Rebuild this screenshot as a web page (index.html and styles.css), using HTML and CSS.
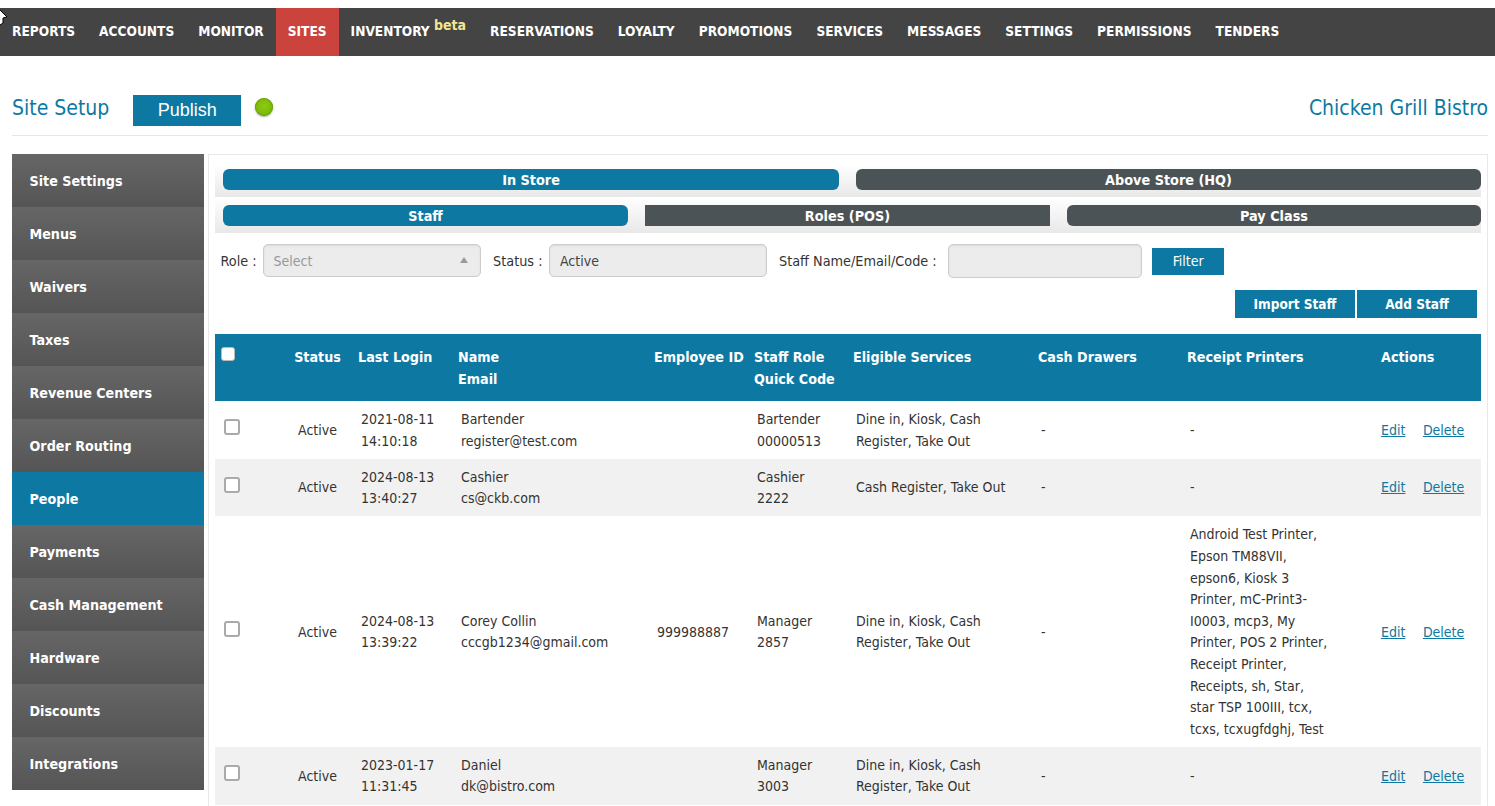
FILE: index.html

```html
<!DOCTYPE html>
<html lang="en">
<head>
    <meta charset="UTF-8">
    <title>Site Setup</title>
    <link rel="stylesheet" href="styles.css">
</head>
<body>
    <svg class="cursor" width="8" height="26" viewBox="0 0 8 26"><path d="M0 10 L7 17 L3 18 L3 23 L0 25" fill="#fff" stroke="#000" stroke-width="1"/></svg>

    <nav class="topnav">
        <a href="#">REPORTS</a>
        <a href="#">ACCOUNTS</a>
        <a href="#">MONITOR</a>
        <a href="#" class="active">SITES</a>
        <a href="#">INVENTORY <sup class="beta">beta</sup></a>
        <a href="#">RESERVATIONS</a>
        <a href="#">LOYALTY</a>
        <a href="#">PROMOTIONS</a>
        <a href="#">SERVICES</a>
        <a href="#">MESSAGES</a>
        <a href="#">SETTINGS</a>
        <a href="#">PERMISSIONS</a>
        <a href="#">TENDERS</a>
    </nav>

    <header class="page-head">
        <h1>Site Setup</h1>
        <button class="publish">Publish</button>
        <span class="status-dot"></span>
        <div class="site-name">Chicken Grill Bistro</div>
    </header>

    <div class="layout">
        <aside class="sidebar">
            <a href="#">Site Settings</a>
            <a href="#">Menus</a>
            <a href="#">Waivers</a>
            <a href="#">Taxes</a>
            <a href="#">Revenue Centers</a>
            <a href="#">Order Routing</a>
            <a href="#" class="active">People</a>
            <a href="#">Payments</a>
            <a href="#">Cash Management</a>
            <a href="#">Hardware</a>
            <a href="#">Discounts</a>
            <a href="#">Integrations</a>
        </aside>

        <main class="panel">
            <div class="tabs tabs-top">
                <a href="#" class="tab on">In Store</a>
                <a href="#" class="tab">Above Store (HQ)</a>
            </div>
            <div class="tabs tabs-sub">
                <a href="#" class="tab on">Staff</a>
                <a href="#" class="tab square">Roles (POS)</a>
                <a href="#" class="tab">Pay Class</a>
            </div>

            <div class="filters">
                <label>Role :</label>
                <div class="field select-field placeholder">Select<span class="caret"></span></div>
                <label>Status :</label>
                <div class="field status-field">Active</div>
                <label>Staff Name/Email/Code :</label>
                <input type="text" class="field name-field">
                <button class="filter-btn">Filter</button>
            </div>

            <div class="actions-bar">
                <button class="action-btn">Import Staff</button>
                <button class="action-btn">Add Staff</button>
            </div>

            <table class="staff">
                <colgroup>
                    <col class="c-check"><col class="c-status"><col class="c-login"><col class="c-name"><col class="c-emp">
                    <col class="c-role"><col class="c-serv"><col class="c-cash"><col class="c-print"><col class="c-act">
                </colgroup>
                <thead>
                    <tr>
                        <th class="head-check"><input type="checkbox" class="check"></th>
                        <th class="center">Status</th>
                        <th>Last Login</th>
                        <th>Name<br>Email</th>
                        <th>Employee ID</th>
                        <th>Staff Role<br>Quick Code</th>
                        <th>Eligible Services</th>
                        <th>Cash Drawers</th>
                        <th>Receipt Printers</th>
                        <th>Actions</th>
                    </tr>
                </thead>
                <tbody>
                    <tr>
                        <td class="cell-check"><input type="checkbox" class="check"></td>
                        <td class="center">Active</td>
                        <td>2021-08-11<br>14:10:18</td>
                        <td>Bartender<br>register@test.com</td>
                        <td></td>
                        <td>Bartender<br>00000513</td>
                        <td>Dine in, Kiosk, Cash<br>Register, Take Out</td>
                        <td>-</td>
                        <td>-</td>
                        <td class="links"><a href="#">Edit</a><a href="#">Delete</a></td>
                    </tr>
                    <tr class="alt">
                        <td class="cell-check"><input type="checkbox" class="check"></td>
                        <td class="center">Active</td>
                        <td>2024-08-13<br>13:40:27</td>
                        <td>Cashier<br>cs@ckb.com</td>
                        <td></td>
                        <td>Cashier<br>2222</td>
                        <td>Cash Register, Take Out</td>
                        <td>-</td>
                        <td>-</td>
                        <td class="links"><a href="#">Edit</a><a href="#">Delete</a></td>
                    </tr>
                    <tr>
                        <td class="cell-check"><input type="checkbox" class="check"></td>
                        <td class="center">Active</td>
                        <td>2024-08-13<br>13:39:22</td>
                        <td>Corey Collin<br>cccgb1234@gmail.com</td>
                        <td>999988887</td>
                        <td>Manager<br>2857</td>
                        <td>Dine in, Kiosk, Cash<br>Register, Take Out</td>
                        <td>-</td>
                        <td>Android Test Printer,<br>Epson TM88VII,<br>epson6, Kiosk 3<br>Printer, mC-Print3-<br>I0003, mcp3, My<br>Printer, POS 2 Printer,<br>Receipt Printer,<br>Receipts, sh, Star,<br>star TSP 100III, tcx,<br>tcxs, tcxugfdghj, Test</td>
                        <td class="links"><a href="#">Edit</a><a href="#">Delete</a></td>
                    </tr>
                    <tr class="alt">
                        <td class="cell-check"><input type="checkbox" class="check"></td>
                        <td class="center">Active</td>
                        <td>2023-01-17<br>11:31:45</td>
                        <td>Daniel<br>dk@bistro.com</td>
                        <td></td>
                        <td>Manager<br>3003</td>
                        <td>Dine in, Kiosk, Cash<br>Register, Take Out</td>
                        <td>-</td>
                        <td>-</td>
                        <td class="links"><a href="#">Edit</a><a href="#">Delete</a></td>
                    </tr>
                </tbody>
            </table>
        </main>
    </div>
</body>
</html>
```

FILE: styles.css

```css
html, body {
    height: 806px;
    overflow: hidden;
}
body {
    margin: 0;
    padding-top: 8px;
    box-sizing: border-box;
    font-family: "DejaVu Sans Condensed", "DejaVu Sans", sans-serif;
    font-size: 14px;
    color: #333;
    background: #fff;
}
a {
    text-decoration: none;
}
button {
    border: none;
    cursor: pointer;
    font-family: inherit;
}

.cursor {
    position: absolute;
    top: 0;
    left: 0;
}

/* Top nav */
.topnav {
    display: flex;
    height: 48px;
    background: #444;
}
.topnav a {
    display: block;
    padding: 0 12px;
    line-height: 47px;
    font-size: 13.6px;
    font-weight: bold;
    color: #fff;
    white-space: nowrap;
}
.topnav a.active {
    background: #cb433d;
}
.beta {
    font-size: 14px;
    line-height: 0;
    color: #f7e492;
    vertical-align: 6px;
}

/* Page title row */
.page-head {
    display: flex;
    align-items: center;
    box-sizing: border-box;
    height: 80px;
    padding-top: 30px;
    margin: 0 7px 18px 12px;
    border-bottom: 1px solid #e6e6e6;
}
.page-head h1 {
    margin: 0 0 6px;
    font-size: 21px;
    font-weight: normal;
    color: #0d79a3;
}
.publish {
    width: 108px;
    height: 31px;
    margin-left: 24px;
    background: #0d79a3;
    color: #fff;
    font-family: "Liberation Sans", sans-serif;
    font-size: 18px;
}
.status-dot {
    width: 18px;
    height: 18px;
    margin: -7px 0 0 14px;
    border-radius: 50%;
    background: radial-gradient(circle at 50% 45%, #8ccb14, #7ab800 70%);
    box-shadow: inset 0 0 0 1px #6f9d10, 0 1px 2px rgba(0, 0, 0, 0.35);
}
.site-name {
    margin: 0 0 6px auto;
    font-size: 21px;
    color: #0d79a3;
}

/* Main layout */
.layout {
    display: flex;
    align-items: flex-start;
    margin-left: 12px;
    gap: 4px;
}
.sidebar {
    width: 192px;
    flex-shrink: 0;
}
.sidebar a {
    display: block;
    height: 53px;
    padding-left: 17.5px;
    line-height: 55px;
    font-size: 14.2px;
    font-weight: bold;
    color: #fff;
    background: linear-gradient(#666, #555);
}
.sidebar a.active {
    background: #0d79a3;
}

.panel {
    width: 1280px;
    height: 652px;
    box-sizing: border-box;
    padding: 10px 6px 0;
    border: 1px solid #e8e8e8;
    border-bottom: none;
}

/* Tab strips */
.tabs {
    display: flex;
    background: linear-gradient(#fff, #e8e8e8);
    padding: 4px 0 7px 8px;
}
.tabs-top {
    gap: 17px;
}
.tabs-sub {
    gap: 17px;
    padding-top: 8px;
}
.tab {
    height: 21px;
    line-height: 23px;
    border-radius: 6px;
    text-align: center;
    font-size: 14.3px;
    font-weight: bold;
    color: #fff;
    background: #4c5356;
}
.tab.on {
    background: #0d79a3;
}
.tab.square {
    border-radius: 0;
}
.tabs-top .tab {
    width: 616px;
}
.tabs-top .tab + .tab {
    width: 625px;
}
.tabs-sub .tab {
    width: 405px;
}
.tabs-sub .tab:last-child {
    width: 414px;
}

/* Filter row */
.filters {
    display: flex;
    align-items: center;
    margin-top: 11px;
    padding-left: 5.5px;
}
.filters label {
    margin-right: 6.5px;
    font-size: 14.3px;
}
.field {
    box-sizing: border-box;
    align-self: flex-start;
    height: 33px;
    padding: 0 9.5px;
    border: 1px solid #ccc;
    border-radius: 5px;
    background: #ececec;
    box-shadow: inset 0 1px 2px rgba(0, 0, 0, 0.08);
    color: #444;
    font: inherit;
    line-height: 33px;
}
.select-field {
    position: relative;
    width: 218px;
    margin-right: 12px;
}
.placeholder {
    color: #999;
}
.caret {
    position: absolute;
    right: 12px;
    top: 12px;
    border-left: 4px solid transparent;
    border-right: 4px solid transparent;
    border-bottom: 6px solid #999;
}
.status-field {
    width: 218px;
    margin: 0 11.5px 0 0.5px;
}
.name-field {
    width: 194px;
    height: 34px;
    margin-left: 5px;
}
.filter-btn {
    width: 72px;
    height: 27px;
    margin-left: 10px;
    background: #0d79a3;
    color: #fff;
    font-size: 14px;
}

.actions-bar {
    display: flex;
    justify-content: flex-end;
    gap: 2px;
    margin: 12px 4px 16px 0;
}
.action-btn {
    width: 120px;
    height: 28px;
    background: #0d79a3;
    color: #fff;
    font-size: 13.5px;
    font-weight: bold;
}

/* Staff table */
.staff {
    width: 1266px;
    table-layout: fixed;
    border-collapse: collapse;
    line-height: 21.6px;
}
.c-check { width: 66px; }
.c-status { width: 73px; }
.c-login { width: 100px; }
.c-name { width: 196px; }
.c-emp { width: 100px; }
.c-role { width: 99px; }
.c-serv { width: 185px; }
.c-cash { width: 149px; }
.c-print { width: 194px; }
.c-act { width: 104px; }

.staff th {
    height: 67px;
    padding: 13px 0 0 4px;
    box-sizing: border-box;
    background: #0d79a3;
    color: #fff;
    text-align: left;
    font-size: 14.2px;
    font-weight: bold;
    vertical-align: top;
    white-space: nowrap;
}
.staff td {
    padding: 8px 0 6.5px 7px;
}
.staff th.center, .staff td.center {
    text-align: center;
    padding-left: 0;
}
.staff tr.alt td {
    background: #f1f1f1;
}
.check {
    display: block;
    appearance: none;
    box-sizing: border-box;
    width: 16px;
    height: 16px;
    margin: 0;
    border: 2px solid #aaa;
    border-radius: 3px;
    background: #fff;
}
.staff td.cell-check {
    padding: 0 0 6px 9px;
}
.head-check .check {
    width: 14px;
    height: 14px;
    margin-left: 2px;
    border: 1px solid #bbb;
}
.staff td.links {
    padding-left: 4px;
    white-space: nowrap;
}
.links a {
    margin-right: 17.5px;
    color: #0d79a3;
    text-decoration: underline;
}
```
